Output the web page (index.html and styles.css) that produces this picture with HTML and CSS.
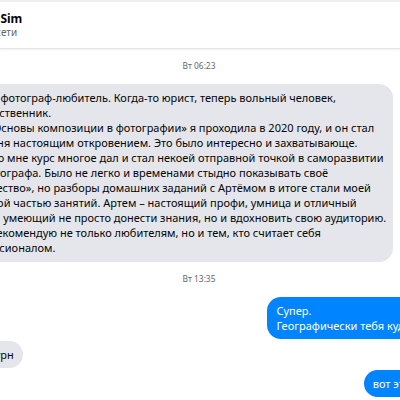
FILE: index.html
```html
<!DOCTYPE html>
<html lang="ru">
<head>
<meta charset="UTF-8" />
<meta name="viewport" content="width=device-width, initial-scale=1.0">
<title>Li Sim</title>
<link rel="stylesheet" href="styles.css">
</head>
<body>
  <div class="header">
    <div class="peer">
      <div class="peer-name">Li Sim</div>
      <div class="peer-status">В сети</div>
    </div>
  </div>

  <div class="chat">
    <div class="stamp">Вт 06:23</div>

    <div class="row in">
      <div class="bubble long">Итак, я фотограф-любитель. Когда-то юрист, теперь вольный человек,
        <br>путешественник.
        <br>Курс «Основы композиции в фотографии» я проходила в 2020 году, и он стал
        <br>для меня настоящим откровением. Это было интересно и захватывающе.
        <br>И лично мне курс многое дал и стал некоей отправной точкой в саморазвитии
        <br>как фотографа. Было не легко и временами стыдно показывать своё
        <br>«творчество», но разборы домашних заданий с Артёмом в итоге стали моей
        <br>любимой частью занятий. Артем – настоящий профи, умница и отличный
        <br>тренер, умеющий не просто донести знания, но и вдохновить свою аудиторию.
        <br>Всем рекомендую не только любителям, но и тем, кто считает себя
        <br>профессионалом.</div>
    </div>

    <div class="stamp">Вт 13:35</div>

    <div class="row out">
      <div class="bubble">Супер.<br>Географически тебя куда занесло?</div>
    </div>
    <div class="row in">
      <div class="bubble">Мельбурн</div>
    </div>
    <div class="row out">
      <div class="bubble">вот это да, круто</div>
    </div>
  </div>
</body>
</html>
```

FILE: styles.css
```css
body {
  margin: 0;
  font-family: "Noto Sans", "Open Sans", sans-serif;
  color: #050505;
  background: #fff;
  overflow: hidden;
}
.header {
  height: 46px;
  border-top: 2px solid #efefef;
  border-bottom: 1px solid #e6e6e6;
  box-shadow: 0 1px 2px rgba(0, 0, 0, 0.06);
  display: flex;
  align-items: center;
}
.peer {
  margin-left: -13px;
}
.peer-name {
  font-size: 12px;
  font-weight: 700;
  line-height: 15px;
}
.peer-status {
  font-size: 10px;
  line-height: 13px;
  color: #65676b;
}
/* wider than the window: the shot is cropped on both sides */
.chat {
  width: 542px;
  margin-left: -72px;
  display: flex;
  flex-direction: column;
}
.stamp {
  text-align: center;
  font-size: 8.4px;
  line-height: 11px;
  color: #65676b;
  padding: 11px 0 13px;
}
.row {
  display: flex;
}
.row + .row {
  margin-top: 2px;
}
.row.in {
  justify-content: flex-start;
  padding-left: 23px;
}
.row.out {
  justify-content: flex-end;
}
.bubble {
  font-size: 11px;
  line-height: 15px;
  padding: 6px 9px;
  border-radius: 14px;
  white-space: nowrap;
}
.bubble.long {
  padding: 6px 7px 7px 9px;
}
.in .bubble {
  background: #e4e6eb;
}
.out .bubble {
  background: #0084ff;
  color: #fff;
}
```
